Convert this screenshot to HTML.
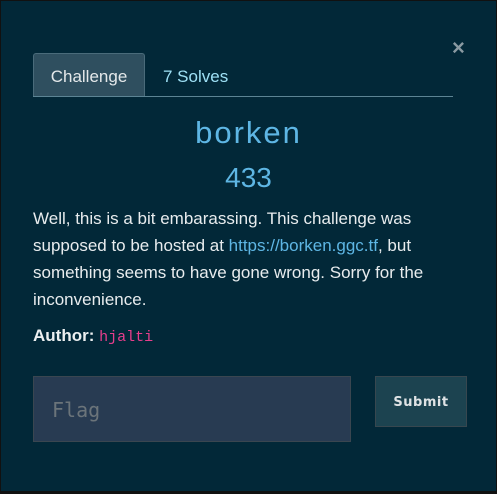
<!DOCTYPE html>
<html><head><style>
html,body{margin:0;padding:0;}
body{width:497px;height:494px;background:#111;position:relative;overflow:hidden;font-family:"Liberation Sans",sans-serif;}
.m{position:absolute;left:1px;top:1px;width:495px;height:490px;background:#022838;}
.close{position:absolute;left:452px;top:35px;color:#8a9aa2;font-size:22px;font-weight:bold;}
.tab{position:absolute;left:33px;top:53px;width:112px;height:44px;background:#2f4f5f;border:1px solid #4a6b7a;border-bottom:none;border-radius:3px 3px 0 0;box-sizing:border-box;color:#e4e8ea;font-size:17px;line-height:46px;text-align:center;}
.tab2{position:absolute;left:163px;top:54px;line-height:46px;color:#9ee0f5;font-size:17px;}
.line{position:absolute;left:33px;top:96px;width:420px;height:1px;background:#5c8494;}
.t{position:absolute;left:0;width:497px;text-align:center;color:#5eb6e4;}
.p{position:absolute;left:33px;top:205px;width:432px;color:#e8ecee;font-size:17px;line-height:27px;}
.p a{color:#5eb6e4;text-decoration:none;}
.au{position:absolute;left:33px;top:326px;color:#eceff0;font-size:17px;font-weight:bold;}
.au code{font-family:"Liberation Mono",monospace;color:#e83e8c;font-weight:normal;font-size:15px;}
.in{position:absolute;left:33px;top:376px;width:318px;height:66px;background:#283b52;border:1px solid #3a4650;box-sizing:border-box;color:#6b747a;font-family:"DejaVu Sans Mono",monospace;font-size:20px;line-height:66px;padding-left:18px;}
.sb{position:absolute;left:375px;top:376px;width:92px;height:51px;background:#1c4350;border:1px solid #37474f;box-sizing:border-box;color:#dfe3e5;font-family:"DejaVu Sans",sans-serif;font-size:13px;font-weight:bold;letter-spacing:0.5px;text-align:center;line-height:51px;}
</style></head><body>
<div class="m"></div>
<div class="close">×</div>
<div class="tab">Challenge</div>
<div class="tab2">7 Solves</div>
<div class="line"></div>
<div class="t" style="top:115px;font-size:31px;letter-spacing:2px;">borken</div>
<div class="t" style="top:162px;font-size:28px;">433</div>
<div class="p">Well, this is a bit embarassing. This challenge was supposed to be hosted at <a>https://borken.ggc.tf</a>, but something seems to have gone wrong. Sorry for the inconvenience.</div>
<div class="au">Author: <code>hjalti</code></div>
<div class="in">Flag</div>
<div class="sb">Submit</div>
</body></html>
